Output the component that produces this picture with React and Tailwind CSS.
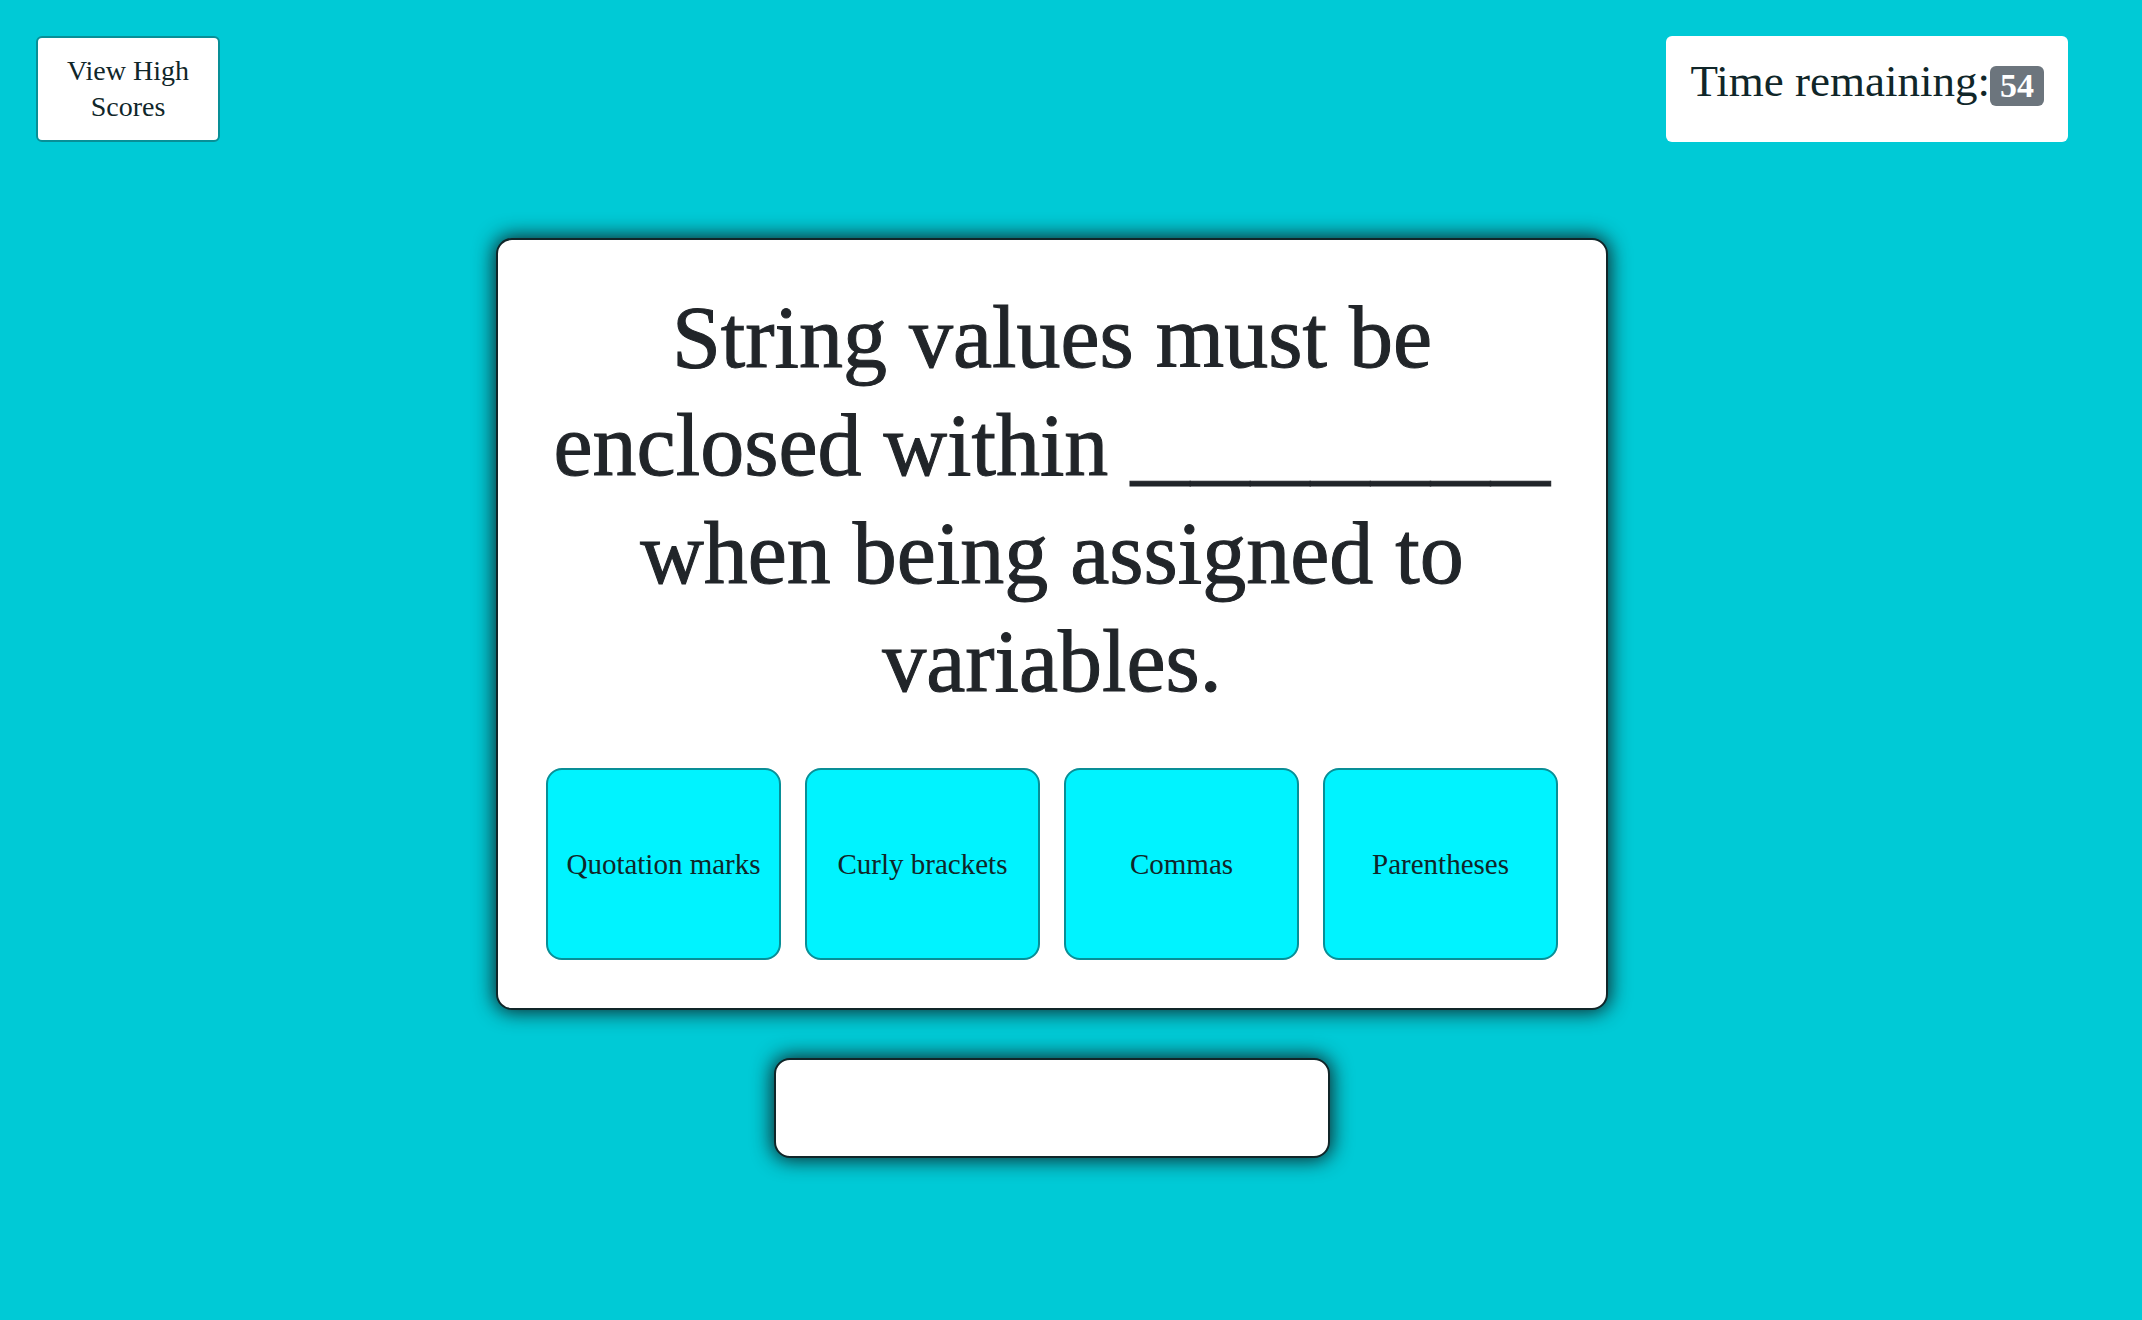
const answers = ["Quotation marks", "Curly brackets", "Commas", "Parentheses"];

export default function App() {
  return (
    <div className="min-h-screen bg-[#00cad6] pt-9 pr-[74px] pb-12 pl-9 font-['Liberation_Serif',serif] text-[#102629]">
      <header className="flex items-stretch justify-between">
        <button
          type="button"
          className="w-[184px] rounded-md border-2 border-[#088f97] bg-white px-6 py-[15px] text-center text-[28px] leading-9"
        >
          View High Scores
        </button>
        <div className="flex items-start rounded-md bg-white px-6 pt-5 pb-4">
          <h2 className="flex items-center text-[45px] leading-[50px]">
            Time remaining:
            <span className="mt-2.5 rounded-md bg-[#6c757d] px-2.5 text-[34px] leading-10 font-bold text-white">
              54
            </span>
          </h2>
        </div>
      </header>

      <main className="mt-24 flex flex-col items-center gap-12">
        <section className="w-full max-w-[1112px] rounded-2xl border-2 border-[#102629] bg-white px-12 pt-11 pb-12 shadow-[0_0_20px_2px_#102629]">
          <h1 className="text-center text-[88px] leading-[108px] text-[#212529] [-webkit-text-stroke:1px_#212529]">
            String values must be enclosed within{" "}
            <span className="font-['Liberation_Mono',monospace] text-[100px] leading-none">_______</span> when being
            assigned to variables.
          </h1>
          <div className="mt-[52px] grid grid-cols-4 gap-6">
            {answers.map((answer) => (
              <button
                key={answer}
                type="button"
                className="h-48 rounded-2xl border-2 border-[#088f97] bg-[#00f3ff] text-[29px] leading-9"
              >
                {answer}
              </button>
            ))}
          </div>
        </section>
        <section
          aria-live="polite"
          className="min-h-[100px] w-full max-w-[556px] rounded-2xl border-2 border-[#102629] bg-white shadow-[0_0_20px_2px_#102629]"
        />
      </main>
    </div>
  );
}
